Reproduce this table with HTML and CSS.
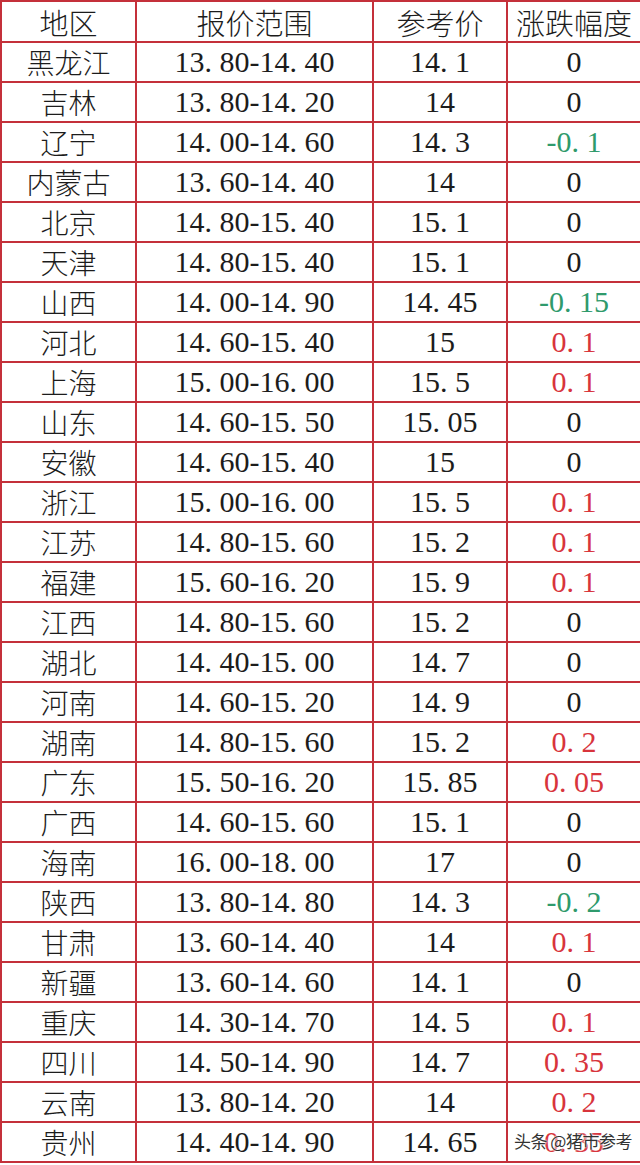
FILE: index.html
```html
<!DOCTYPE html>
<html lang="zh-CN">
<head>
<meta charset="utf-8">
<title>报价</title>
<link rel="stylesheet" href="styles.css">
</head>
<body>
<div class="sheet">
<table class="price">
<colgroup><col class="c1"><col class="c2"><col class="c3"><col class="c4"></colgroup>
<thead>
<tr><th>地区</th><th>报价范围</th><th>参考价</th><th>涨跌幅度</th></tr>
</thead>
<tbody>
<tr><td class="r">黑龙江</td><td>13<i>.</i>80-14<i>.</i>40</td><td>14<i>.</i>1</td><td>0</td></tr>
<tr><td class="r">吉林</td><td>13<i>.</i>80-14<i>.</i>20</td><td>14</td><td>0</td></tr>
<tr><td class="r">辽宁</td><td>14<i>.</i>00-14<i>.</i>60</td><td>14<i>.</i>3</td><td class="down">-0<i>.</i>1</td></tr>
<tr><td class="r">内蒙古</td><td>13<i>.</i>60-14<i>.</i>40</td><td>14</td><td>0</td></tr>
<tr><td class="r">北京</td><td>14<i>.</i>80-15<i>.</i>40</td><td>15<i>.</i>1</td><td>0</td></tr>
<tr><td class="r">天津</td><td>14<i>.</i>80-15<i>.</i>40</td><td>15<i>.</i>1</td><td>0</td></tr>
<tr><td class="r">山西</td><td>14<i>.</i>00-14<i>.</i>90</td><td>14<i>.</i>45</td><td class="down">-0<i>.</i>15</td></tr>
<tr><td class="r">河北</td><td>14<i>.</i>60-15<i>.</i>40</td><td>15</td><td class="up">0<i>.</i>1</td></tr>
<tr><td class="r">上海</td><td>15<i>.</i>00-16<i>.</i>00</td><td>15<i>.</i>5</td><td class="up">0<i>.</i>1</td></tr>
<tr><td class="r">山东</td><td>14<i>.</i>60-15<i>.</i>50</td><td>15<i>.</i>05</td><td>0</td></tr>
<tr><td class="r">安徽</td><td>14<i>.</i>60-15<i>.</i>40</td><td>15</td><td>0</td></tr>
<tr><td class="r">浙江</td><td>15<i>.</i>00-16<i>.</i>00</td><td>15<i>.</i>5</td><td class="up">0<i>.</i>1</td></tr>
<tr><td class="r">江苏</td><td>14<i>.</i>80-15<i>.</i>60</td><td>15<i>.</i>2</td><td class="up">0<i>.</i>1</td></tr>
<tr><td class="r">福建</td><td>15<i>.</i>60-16<i>.</i>20</td><td>15<i>.</i>9</td><td class="up">0<i>.</i>1</td></tr>
<tr><td class="r">江西</td><td>14<i>.</i>80-15<i>.</i>60</td><td>15<i>.</i>2</td><td>0</td></tr>
<tr><td class="r">湖北</td><td>14<i>.</i>40-15<i>.</i>00</td><td>14<i>.</i>7</td><td>0</td></tr>
<tr><td class="r">河南</td><td>14<i>.</i>60-15<i>.</i>20</td><td>14<i>.</i>9</td><td>0</td></tr>
<tr><td class="r">湖南</td><td>14<i>.</i>80-15<i>.</i>60</td><td>15<i>.</i>2</td><td class="up">0<i>.</i>2</td></tr>
<tr><td class="r">广东</td><td>15<i>.</i>50-16<i>.</i>20</td><td>15<i>.</i>85</td><td class="up">0<i>.</i>05</td></tr>
<tr><td class="r">广西</td><td>14<i>.</i>60-15<i>.</i>60</td><td>15<i>.</i>1</td><td>0</td></tr>
<tr><td class="r">海南</td><td>16<i>.</i>00-18<i>.</i>00</td><td>17</td><td>0</td></tr>
<tr><td class="r">陕西</td><td>13<i>.</i>80-14<i>.</i>80</td><td>14<i>.</i>3</td><td class="down">-0<i>.</i>2</td></tr>
<tr><td class="r">甘肃</td><td>13<i>.</i>60-14<i>.</i>40</td><td>14</td><td class="up">0<i>.</i>1</td></tr>
<tr><td class="r">新疆</td><td>13<i>.</i>60-14<i>.</i>60</td><td>14<i>.</i>1</td><td>0</td></tr>
<tr><td class="r">重庆</td><td>14<i>.</i>30-14<i>.</i>70</td><td>14<i>.</i>5</td><td class="up">0<i>.</i>1</td></tr>
<tr><td class="r">四川</td><td>14<i>.</i>50-14<i>.</i>90</td><td>14<i>.</i>7</td><td class="up">0<i>.</i>35</td></tr>
<tr><td class="r">云南</td><td>13<i>.</i>80-14<i>.</i>20</td><td>14</td><td class="up">0<i>.</i>2</td></tr>
<tr><td class="r">贵州</td><td>14<i>.</i>40-14<i>.</i>90</td><td>14<i>.</i>65</td><td class="up">0<i>.</i>35</td></tr>
</tbody>
</table>
<div class="mark">头条 @猪市参考</div>
</div>
</body>
</html>
```

FILE: styles.css
```css
html, body {
  margin: 0;
  padding: 0;
  background: #ffffff;
}

.sheet {
  position: relative;
  width: 640px;
  height: 1165px;
  overflow: hidden;
}

.price {
  width: 640px;
  border-collapse: collapse;
  table-layout: fixed;
  font-family: "Liberation Serif", "Noto Sans CJK SC", serif;
  color: #1c1c1c;
}

.c1 { width: 135px; }
.c2 { width: 237px; }
.c3 { width: 134px; }
.c4 { width: 134px; }

.price th,
.price td {
  border: 2px solid #c4303a;
  padding: 0;
  text-align: center;
  vertical-align: middle;
  white-space: nowrap;
  font-size: 30px;
  line-height: 30px;
}

.price thead tr {
  height: 41px;
}

.price tbody tr {
  height: 40px;
}

.price th {
  font-family: "Noto Sans CJK SC", sans-serif;
  font-weight: 300;
  font-size: 29px;
}

.price td.r {
  font-family: "Noto Sans CJK SC", sans-serif;
  font-weight: 300;
  font-size: 28px;
}

.price i {
  font-style: normal;
  display: inline-block;
  width: 15px;
  text-align: left;
}

.price td.up { color: #d8343c; }
.price td.down { color: #2f9a6c; }

.mark {
  position: absolute;
  left: 514px;
  top: 1128px;
  font-family: "Noto Sans CJK SC", sans-serif;
  font-size: 17px;
  color: #333333;
  text-shadow: 0 0 2px #ffffff, 0 0 2px #ffffff, 0 0 3px #ffffff;
  letter-spacing: -0.5px;
}
```
